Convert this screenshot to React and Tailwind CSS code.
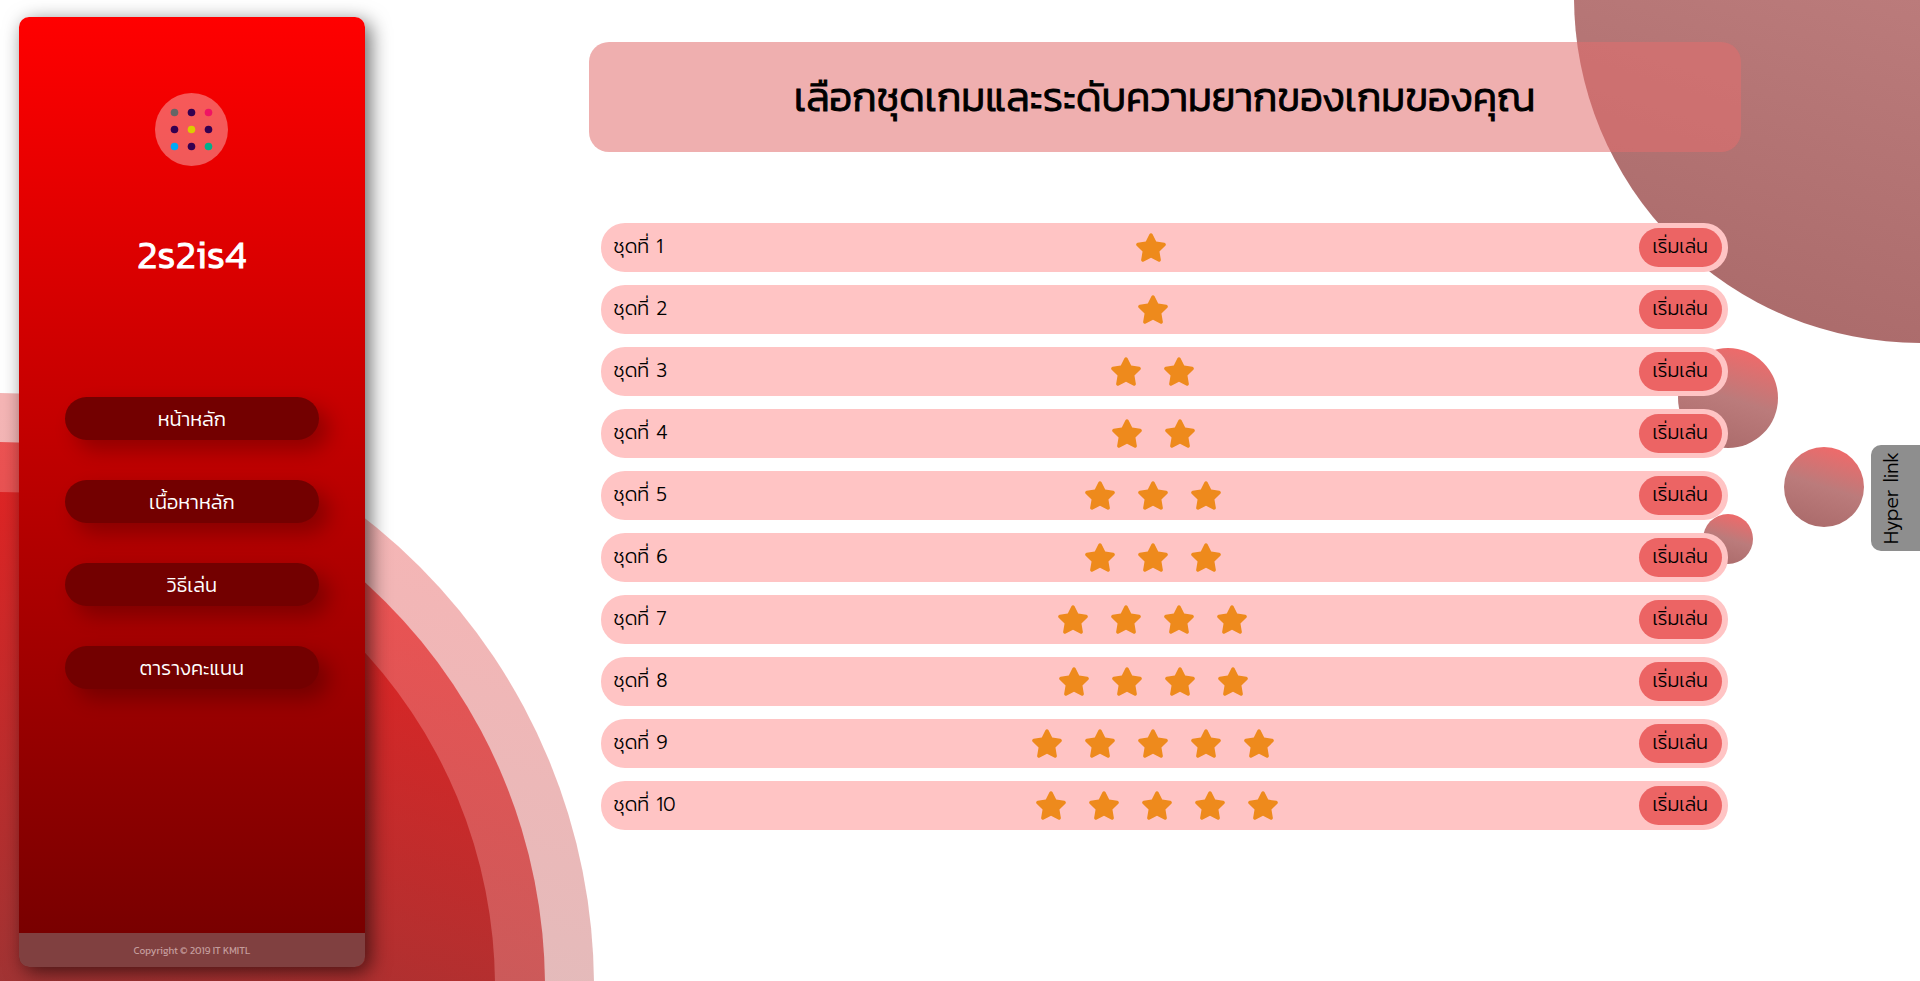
import { FaStar } from "react-icons/fa";

const MENU = ["หน้าหลัก", "เนื้อหาหลัก", "วิธีเล่น", "ตารางคะแนน"];

const SETS = [1, 1, 2, 2, 3, 3, 4, 4, 5, 5].map((stars, i) => ({ id: i + 1, stars }));

const DOTS = [
  ["#666666", "#350050", "#f01464"],
  ["#350050", "#dccc00", "#350050"],
  ["#00aaf5", "#350050", "#00b08c"],
];

function Logo() {
  return (
    <svg viewBox="0 0 73 73" className="size-[73px]" role="img" aria-label="2s2is4">
      <circle cx="36.5" cy="36.5" r="36.5" fill="#ffffff" fillOpacity="0.35" />
      {DOTS.map((row, y) =>
        row.map((fill, x) => (
          <circle key={`${x}-${y}`} cx={19.5 + x * 17} cy={19.5 + y * 17} r="3.8" fill={fill} />
        ))
      )}
    </svg>
  );
}

function Backdrop() {
  const disc = "absolute rounded-full bg-linear-[197deg,#fb6666_0%,#bb7b7b_50%,#a86868_100%]";
  return (
    <div aria-hidden="true" className="absolute inset-0 -z-10 overflow-hidden">
      <div className={`${disc} -top-[349px] -right-[346px] size-[692px]`} />
      <div className={`${disc} top-[348px] right-[142px] size-[100px]`} />
      <div className={`${disc} top-[447px] right-[56px] size-[80px]`} />
      <div className={`${disc} top-[514px] right-[167px] size-[50px]`} />
      <div className={`${disc} -bottom-[600px] -left-[594px] size-[1188px] opacity-50`} />
      <div className="absolute -bottom-[551px] -left-[545px] size-[1090px] rounded-full bg-linear-[197deg,#fb2424_0%,#b03434_50%,#803030_100%] opacity-70" />
      <div className="absolute -bottom-[501px] -left-[495px] size-[990px] rounded-full bg-linear-[197deg,#ee0c0c_0%,#942222_50%,#802020_100%] opacity-70" />
    </div>
  );
}

function Sidebar() {
  return (
    <aside className="flex w-[18vw] flex-none flex-col items-center overflow-hidden rounded-[10px] bg-linear-to-b/srgb from-[#ff0000] to-[#740000] text-white shadow-[5px_5px_20px_rgba(0,0,0,0.6)]">
      <div className="flex flex-1 flex-col items-center self-stretch px-[46px] pt-[76px]">
        <Logo />
        <h1 className="mt-[58px] text-[40px] leading-[60px] font-light [-webkit-text-stroke:1px]">2s2is4</h1>
        <nav className="mt-[113px] flex flex-col gap-10 self-stretch">
          {MENU.map((label) => (
            <a
              key={label}
              href="#"
              className="flex h-[43px] items-center justify-center rounded-full bg-[#730000] text-[20px] leading-[30px] font-light shadow-[10px_10px_20px_rgba(0,0,0,0.25)]"
            >
              {label}
            </a>
          ))}
        </nav>
      </div>
      <footer className="flex h-[34px] items-center justify-center self-stretch bg-[#804040] text-[10px] text-[#c49c9c]">
        Copyright © 2019 IT KMITL
      </footer>
    </aside>
  );
}

function SetRow({ id, stars }) {
  return (
    <li className="flex h-[49px] items-center justify-between rounded-3xl bg-[#ffc4c4] pr-1.5 pl-[13px] font-['Prompt','Kanit',sans-serif] text-[19px] font-light">
      <span>ชุดที่ {id}</span>
      <span className="flex gap-[21px] text-[#ee8a1c]" role="img" aria-label={`${stars}/5`}>
        {Array.from({ length: stars }, (_, i) => (
          <FaStar key={i} className="h-[29px] w-8" />
        ))}
      </span>
      <button type="button" className="h-[39px] w-[83px] cursor-pointer rounded-full bg-[#ec6464]">
        เริ่มเล่น
      </button>
    </li>
  );
}

export default function App() {
  return (
    <div className="relative isolate flex min-h-screen bg-white pt-[17px] pb-[14px] pl-[19px] font-['Kanit','Prompt','Noto_Sans',sans-serif] text-black">
      <Backdrop />
      <Sidebar />
      <main className="ml-[224px] w-[60vw] flex-none pt-[25px]">
        <h2 className="flex h-[110px] items-center justify-center rounded-[20px] bg-[#e26d6d]/55 text-[40px] font-light [-webkit-text-stroke:1px]">
          เลือกชุดเกมและระดับความยากของเกมของคุณ
        </h2>
        <ul className="mt-[71px] flex flex-col gap-[13px] pr-[13px] pl-3">
          {SETS.map((s) => (
            <SetRow key={s.id} {...s} />
          ))}
        </ul>
      </main>
      <button
        type="button"
        className="fixed top-[445px] right-0 flex h-[106px] w-[49px] cursor-pointer items-center justify-center rounded-l-[10px] bg-[#8e8e8e] pr-1.5 font-['Prompt','Kanit',sans-serif] text-[19px] font-light"
      >
        <span className="rotate-180 [writing-mode:vertical-rl]">Hyper link</span>
      </button>
    </div>
  );
}
